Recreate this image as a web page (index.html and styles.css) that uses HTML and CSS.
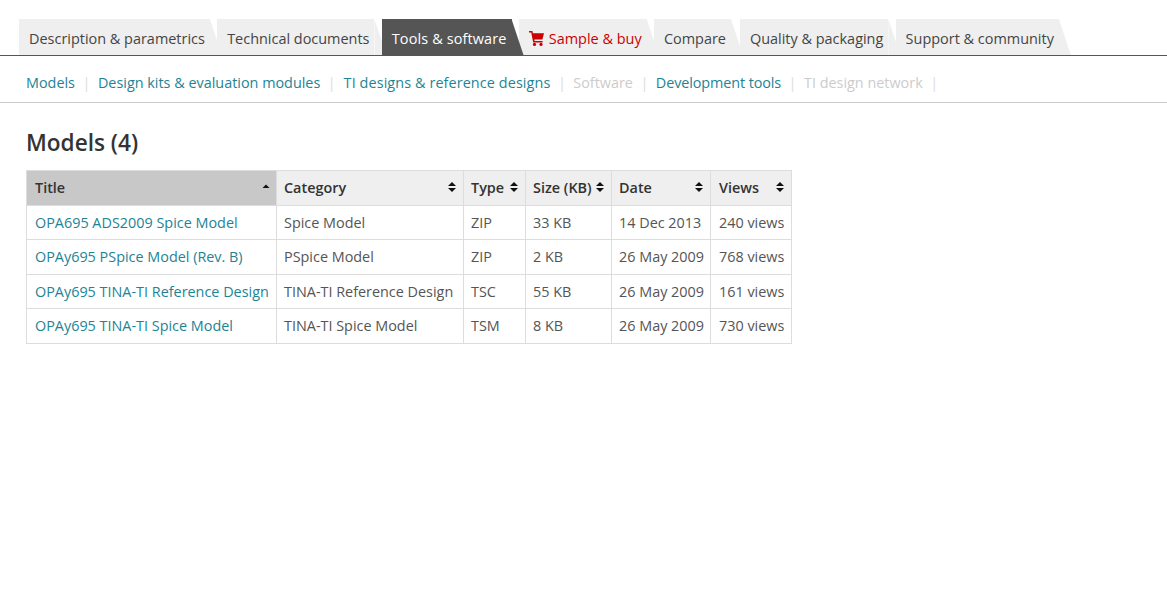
FILE: index.html
```html
<!DOCTYPE html>
<html lang="en">
<head>
<meta charset="utf-8">
<title>Models</title>
<link rel="stylesheet" href="styles.css">
</head>
<body>
<nav class="tabs">
  <a class="tab">Description &amp; parametrics</a>
  <a class="tab">Technical documents</a>
  <a class="tab active">Tools &amp; software</a>
  <a class="tab buy"><svg class="cart" width="15" height="15" viewBox="0 0 15 15"><path d="M0 0h3.4l.5 2.2H15l-1.6 6.3H5.3l.3 1.5h8v1.5H4.2L2.2 1.5H0z" fill="#c00"/><circle cx="5.5" cy="13.4" r="1.6" fill="#c00"/><circle cx="12" cy="13.4" r="1.6" fill="#c00"/></svg>Sample &amp; buy</a>
  <a class="tab compare">Compare</a>
  <a class="tab">Quality &amp; packaging</a>
  <a class="tab">Support &amp; community</a>
</nav>
<nav class="subnav">
  <a class="link">Models</a><span class="sep">|</span>
  <a class="link">Design kits &amp; evaluation modules</a><span class="sep">|</span>
  <a class="link loose">TI designs &amp; reference designs</a><span class="sep">|</span>
  <span class="off">Software</span><span class="sep">|</span>
  <a class="link tight">Development tools</a><span class="sep">|</span>
  <span class="off">TI design network</span><span class="sep">|</span>
</nav>
<main class="content">
  <h1 class="heading">Models (4)</h1>
  <table class="grid">
    <thead>
      <tr>
        <th class="c1 sorted"><div class="th"><span>Title</span><svg class="sort" width="8" height="10" viewBox="0 0 8 10"><path d="M4 2.5l3.5 3.5h-7z" fill="#111"/></svg></div></th>
        <th class="c2"><div class="th"><span>Category</span><svg class="sort" width="8" height="10" viewBox="0 0 8 10"><path d="M4 0l4 4H0zM4 10L0 6h8z" fill="#111"/></svg></div></th>
        <th class="c3"><div class="th"><span>Type</span><svg class="sort" width="8" height="10" viewBox="0 0 8 10"><path d="M4 0l4 4H0zM4 10L0 6h8z" fill="#111"/></svg></div></th>
        <th class="c4"><div class="th"><span>Size (KB)</span><svg class="sort" width="8" height="10" viewBox="0 0 8 10"><path d="M4 0l4 4H0zM4 10L0 6h8z" fill="#111"/></svg></div></th>
        <th class="c5"><div class="th"><span>Date</span><svg class="sort" width="8" height="10" viewBox="0 0 8 10"><path d="M4 0l4 4H0zM4 10L0 6h8z" fill="#111"/></svg></div></th>
        <th class="c6"><div class="th"><span>Views</span><svg class="sort" width="8" height="10" viewBox="0 0 8 10"><path d="M4 0l4 4H0zM4 10L0 6h8z" fill="#111"/></svg></div></th>
      </tr>
    </thead>
    <tbody>
      <tr><td><a class="link">OPA695 ADS2009 Spice Model</a></td><td>Spice Model</td><td>ZIP</td><td>33 KB</td><td>14 Dec 2013</td><td>240 views</td></tr>
      <tr><td><a class="link">OPAy695 PSpice Model (Rev. B)</a></td><td>PSpice Model</td><td>ZIP</td><td>2 KB</td><td>26 May 2009</td><td>768 views</td></tr>
      <tr><td><a class="link">OPAy695 TINA-TI Reference Design</a></td><td>TINA-TI Reference Design</td><td>TSC</td><td>55 KB</td><td>26 May 2009</td><td>161 views</td></tr>
      <tr><td><a class="link">OPAy695 TINA-TI Spice Model</a></td><td>TINA-TI Spice Model</td><td>TSM</td><td>8 KB</td><td>26 May 2009</td><td>730 views</td></tr>
    </tbody>
  </table>
</main>
</body>
</html>
```
FILE: styles.css
```css
* { box-sizing: border-box; }
body {
  margin: 0;
  background: #fff;
  color: #555;
  font-family: "Open Sans", "Liberation Sans", sans-serif;
  font-size: 14.4px;
}
.tabs {
  display: flex;
  height: 56px;
  padding: 19px 0 0 19px;
  border-bottom: 1px solid #555;
  font-size: 14.45px;
}
.tab {
  position: relative;
  display: flex;
  align-items: center;
  height: 36px;
  padding: 2px 5px 0 10px;
  margin-right: 7.3px;
  background: #efefef;
  color: #444;
  white-space: nowrap;
}
.tab::after {
  content: "";
  position: absolute;
  top: 0;
  left: 100%;
  width: 12px;
  height: 36px;
  background: inherit;
  clip-path: polygon(0 0, 100% 100%, 0 100%);
}
.tab.active {
  z-index: 1;
  background: #555;
  color: #fff;
  letter-spacing: .13px;
}
.tab.buy { color: #c00; }
.tab.compare { margin-right: 9px; }
.cart { margin-right: 5px; flex: none; }
.subnav {
  display: flex;
  align-items: center;
  height: 47px;
  padding: 8px 0 2px 26px;
  border-bottom: 1px solid #ccc;
}
.link { color: #1d8496; }
.loose { letter-spacing: .1px; margin-left: .4px; }
.tight { letter-spacing: -.1px; }
.off { color: #ccc; }
.sep { color: #ddd; margin: 0 7.5px; }
.content { padding: 0 26px; }
.heading {
  margin: 25px 0 12px;
  font-size: 22.6px;
  line-height: 30px;
  font-weight: 600;
  color: #333;
}
.grid {
  border-collapse: collapse;
  table-layout: fixed;
  width: 765px;
}
.grid th, .grid td {
  border: 1px solid #ddd;
  padding: 0 7px 0 7px;
  white-space: nowrap;
  text-align: left;
  font-weight: 400;
}
.grid td:first-child, .grid th:first-child { padding-left: 8px; }
.grid td:last-child, .grid th:last-child { padding-left: 8px; }
.grid td { height: 34.5px; }
.grid th {
  height: 34.5px;
  padding-bottom: 1px;
  background: #efefef;
  color: #333;
  font-weight: 600;
}
.grid th.sorted { background: #c8c8c8; padding-right: 6px; }
.th { display: flex; align-items: center; justify-content: space-between; }
.c1 { width: 250px; }
.c2 { width: 187px; }
.c3 { width: 62px; }
.c4 { width: 86px; }
.c5 { width: 99px; }
.c6 { width: 81px; }
```
